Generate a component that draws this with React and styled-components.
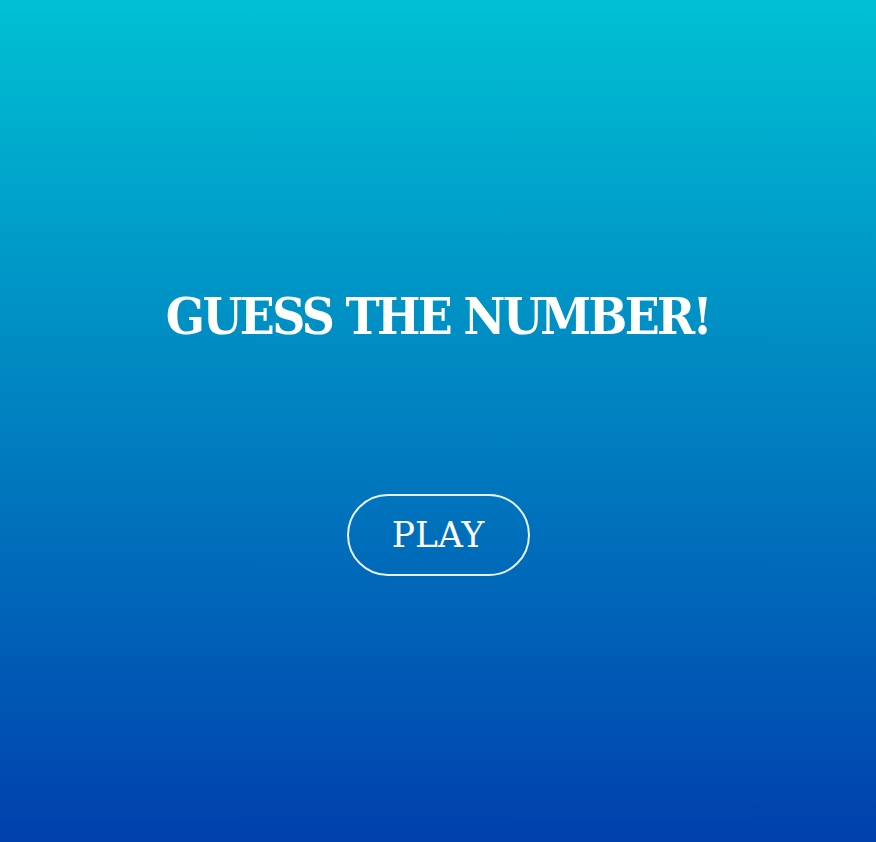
import React from "react";
import styled, { createGlobalStyle } from "styled-components";

const Global = createGlobalStyle`
  html, body { margin: 0; padding: 0; height: 100%; }
  #root { height: 100%; }
`;

const Screen = styled.main`
  box-sizing: border-box;
  width: 100%;
  height: 842px;
  background: linear-gradient(to bottom, #00c1d3 0%, #0040ad 100%);
  display: flex;
  flex-direction: column;
  align-items: center;
  padding-top: 286px;
  font-family: "DejaVu Serif", serif;
  color: #fff;
`;

const Title = styled.h1`
  margin: 0;
  font-size: 51px;
  font-weight: 700;
  font-stretch: condensed;
  line-height: 60px;
  letter-spacing: -2.6px;
`;

const PlayButton = styled.button`
  margin-top: 148px;
  width: 183px;
  height: 82px;
  border: 2px solid rgba(255, 255, 255, 0.9);
  border-radius: 41px;
  background: transparent;
  color: #fff;
  font-family: inherit;
  font-size: 34.5px;
  font-weight: 400;
  cursor: pointer;
`;

export default function App() {
  return (
    <>
      <Global />
      <Screen>
        <Title>GUESS THE NUMBER!</Title>
        <PlayButton>PLAY</PlayButton>
      </Screen>
    </>
  );
}
